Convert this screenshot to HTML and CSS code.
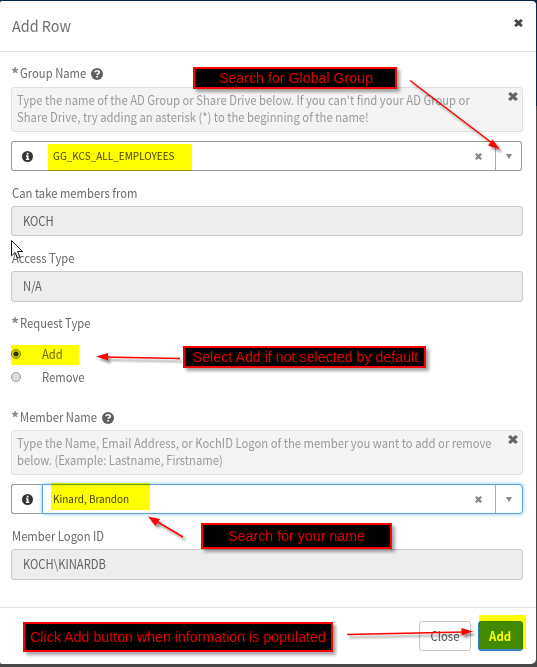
FILE: index.html
```html
<!DOCTYPE html>
<html lang="en">
<head>
<meta charset="utf-8">
<title>Add Row</title>
<link rel="stylesheet" href="styles.css">
</head>
<body>
<svg class="defs" width="0" height="0">
  <symbol id="times" viewBox="0 0 10 10" preserveAspectRatio="none"><path d="M2.500 0 5 2.500 7.500 0 10 2.300 7.200 5 10 7.700 7.500 10 5 7.500 2.500 10 0 7.700 2.800 5 0 2.300z" fill="currentColor"/></symbol>
  <symbol id="question" viewBox="0 0 12 12"><circle cx="6" cy="6" r="6" fill="currentColor"/><path d="M3.8 4.300C4.100 3.200 5 2.700 6.100 2.700c1.200 0 2.200.7 2.200 1.700 0 1.200-2.100 1.400-2.100 2.700" fill="none" stroke="#fff" stroke-width="1.600"/><path d="M5.300 8h1.700v1.600H5.300z" fill="#fff"/></symbol>
  <symbol id="info" viewBox="0 0 12 12"><circle cx="6" cy="6" r="6" fill="currentColor"/><path d="M5.100 2h2v1.700h-2zM4.300 4.700h2.800v3.700h.9v1.400H4.200V8.400h.9V6h-.8z" fill="#fff"/></symbol>
</svg>
<div class="modal">
  <header class="head"><h1>Add Row</h1><svg class="close"><use href="#times"/></svg></header>
  <main class="content">
    <div class="label"><b class="star">*</b><span class="t">Group Name</span><svg class="q"><use href="#question"/></svg></div>
    <div class="hint"><p>Type the name of the AD Group or Share Drive below. If you can't find your AD Group or<br>Share Drive, try adding an asterisk (*) to the beginning of the name!</p><svg class="dismiss"><use href="#times"/></svg></div>
    <div class="select">
      <div class="addon"><svg class="i"><use href="#info"/></svg></div>
      <div class="field"><span>GG_KCS_ALL_EMPLOYEES</span><svg class="clear"><use href="#times"/></svg><div class="drop"><i></i></div></div>
    </div>
    <div class="label take"><span class="t">Can take members from</span></div>
    <div class="input"><span class="t">KOCH</span></div>
    <div class="label access"><span class="t">Access Type</span></div>
    <div class="input tall"><span class="t">N/A</span></div>
    <div class="label request"><b class="star">*</b><span class="t">Request Type</span></div>
    <div class="radio"><i class="dot on"></i><span class="t">Add</span></div>
    <div class="radio"><i class="dot"></i><span class="t">Remove</span></div>
    <div class="label member"><b class="star">*</b><span class="t">Member Name</span><svg class="q"><use href="#question"/></svg></div>
    <div class="hint second"><p>Type the Name, Email Address, or KochID Logon of the member you want to add or remove<br>below. (Example: Lastname, Firstname)</p><svg class="dismiss"><use href="#times"/></svg></div>
    <div class="select wide">
      <div class="addon"><svg class="i"><use href="#info"/></svg></div>
      <div class="field focus"><span>Kinard, Brandon</span><svg class="clear"><use href="#times"/></svg><div class="drop"><i></i></div></div>
    </div>
    <div class="label logon"><span class="t">Member Logon ID</span></div>
    <div class="input tall"><span class="t">KOCH\KINARDB</span></div>
  </main>
  <footer class="foot"><div class="btn"><span>Close</span></div><div class="btn primary"><span>Add</span></div></footer>
</div>

<div class="mark m-group"></div>
<div class="mark m-add"></div>
<div class="mark m-member"></div>
<div class="mark m-submit"></div>

<svg class="arrows" viewBox="0 0 537 667">
  <defs><filter id="sh" x="-20%" y="-50%" width="150%" height="250%" filterUnits="objectBoundingBox"><feDropShadow dx="2.5" dy="3" stdDeviation="1" flood-color="#000" flood-opacity=".4"/></filter></defs>
  <g fill="#f00" stroke="#f00" stroke-width="1.5" filter="url(#sh)">
    <path d="M410 80.500 492 143"/><path stroke="none" d="M500 149.500 488 145.500 492.500 139.500z"/>
    <path d="M180 358.500 104 357"/><path stroke="none" d="M96 356.500 108 353v7.500z"/>
    <path d="M183 537 156 521"/><path stroke="none" d="M148 516.500 160 519 155.500 526z"/>
    <path d="M347 634.500 464 632"/><path stroke="none" d="M473 631.500 461.500 628v7.500z"/>
  </g>
</svg>
<div class="note n1"><span>Search for Global Group</span></div>
<div class="note n2"><span>Select Add if not selected by default</span></div>
<div class="note n3"><span>Search for your name</span></div>
<div class="note n4"><span>Click Add button when information is populated</span></div>
<svg class="cursor" viewBox="0 0 12 19"><path d="M.5.5v15.300l3.600-3.400 2.600 5.700 2.300-1-2.500-5.600h5z" fill="#fff" stroke="#112"/></svg>
</body>
</html>
```
FILE: styles.css
```css
* { box-sizing: border-box; }
body {
  margin: 0; width: 537px; height: 667px; padding-top: 1px; overflow: hidden; position: relative;
  background: linear-gradient(#05264c 0 106px, #484848 106px);
  font: 12.5px/17px "Noto Sans CJK SC", "Noto Sans", sans-serif; color: #6b6b6b;
}
.defs { position: absolute; }
.modal { width: 536px; height: 663px; background: #fff; border-radius: 2px 4px 5px 2px; }
/* condensed form text */
.t { display: inline-block; transform: scaleX(.9); transform-origin: 0 50%; }
.head { height: 51px; border-bottom: 1px solid #e2e2e2; display: flex; justify-content: space-between; align-items: center; padding: 0 13px 0 12px; }
h1 { margin: 0; font-size: 15px; font-weight: 400; line-height: 20px; color: #707070; transform: scaleX(.96); transform-origin: 0 50%; }
.close { width: 9px; height: 8px; color: #454545; margin-top: -6px; }
.content { padding: 13px 13px 0 11px; height: 555px; }
.label { height: 17px; display: flex; align-items: center; padding-left: 1px; white-space: nowrap; }
.label .t { margin-top: -2px; }
.star { width: 8px; font-size: 16px; font-weight: 700; color: #8c8c8c; margin-left: -1px; margin-right: 1px; }
.q { width: 12px; height: 12px; margin-left: -3px; color: #606060; }
.member .q { margin-left: -4px; }
.hint { height: 45px; margin-top: 5px; border: 1px solid #e0e0e0; border-radius: 3px; background: #f4f4f4; color: #9b9b9b; display: flex; justify-content: space-between; padding: 4px 4px 0 5px; white-space: nowrap; }
.second { margin-top: 4px; }
.hint p { margin: -1px 0 0; width: 480px; transform: scaleX(.902); transform-origin: 0 50%; }
.dismiss { width: 10px; height: 9px; color: #666; flex: none; }
.select { display: flex; height: 30px; margin-top: 9px; width: 511px; }
.wide { width: 512px; }
.addon { width: 31px; border: 1px solid #999; border-right: 0; border-radius: 3px 0 0 3px; display: flex; align-items: center; padding-left: 10px; }
.i { width: 11px; height: 11px; color: #333; }
.field { flex: 1; border: 1px solid #999; border-left: 0; border-radius: 0 3px 3px 0; display: flex; align-items: center; padding-left: 11px; font-size: 10px; color: #444; }
.field span { margin-top: -2px; }
.focus { border: 1px solid #62a4da; border-radius: 0 3px 3px 0; padding-left: 10px; box-shadow: 0 0 4px #8fc4ee, inset 0 0 1px #71b4ea; }
.clear { width: 7px; height: 7px; color: #888; margin-left: auto; }
.drop { width: 26px; height: 27px; margin-left: 13px; border-left: 1px solid #aaa; display: flex; align-items: center; justify-content: center; }
.focus .drop { width: 27px; height: 28px; }
.drop i { border: 3px solid transparent; border-top: 5px solid #888; border-bottom: 0; }
.take, .access, .logon { margin-top: 14px; }
.input { height: 30px; margin-top: 4px; border: 1px solid #c9c9c9; border-radius: 3px; background: #ededed; padding-left: 11px; line-height: 27px; color: #636363; }
.tall { height: 31px; line-height: 28px; }
.request { margin-top: 13px; margin-bottom: 11px; }
.radio { height: 23px; display: flex; align-items: center; }
.radio .t { margin-left: 21px; margin-top: -2px; }
.dot { width: 10px; height: 10px; border: 1px solid #999; border-radius: 50%; background: #ddd; margin-top: -1px; }
.on { background: radial-gradient(circle, #333 0 2.2px, #ddd 3px); border-color: #777; }
.member { margin-top: 20px; }
.foot { height: 57px; border-top: 1px solid #e2e2e2; display: flex; justify-content: flex-end; gap: 7px; padding: 13px 13px 0 0; }
.btn { width: 52px; height: 30px; border: 1px solid #c4c4c4; border-radius: 3px; text-align: center; line-height: 27px; color: #555; }
.btn span { display: inline-block; transform: scaleX(.91); }
.primary { width: 45px; background: #428bca; border-color: #357ebd; color: #fff; font-weight: 700; }
.mark { position: absolute; background: #ff0; mix-blend-mode: multiply; }
.m-group { left: 48px; top: 144px; width: 144px; height: 27px; }
.m-add { left: 11px; top: 345px; width: 68px; height: 20px; }
.m-member { left: 51px; top: 483px; width: 99px; height: 27px; }
.m-submit { left: 479px; top: 615px; width: 47px; height: 34px; }
.arrows { position: absolute; left: 0; top: 0; width: 537px; height: 667px; }
.note { position: absolute; background: #000; border: 2px solid #f00; box-shadow: 3px 3px 3px rgba(0,0,0,.35); color: #e60000; font: 14px/18px "Liberation Sans", sans-serif; letter-spacing: .1px; display: flex; align-items: center; justify-content: center; white-space: nowrap; padding-left: 2px; }
.n1 { left: 193px; top: 67px; width: 204px; height: 22px; }
.n2 { left: 183px; top: 346px; width: 243px; height: 22px; }
.n3 { left: 201px; top: 523px; width: 191px; height: 26px; padding-left: 0; }
.n4 { left: 23px; top: 622px; width: 310px; height: 30px; padding: 0 0 1px; }
.cursor { position: absolute; left: 11px; top: 240px; width: 12px; height: 19px; }
```
